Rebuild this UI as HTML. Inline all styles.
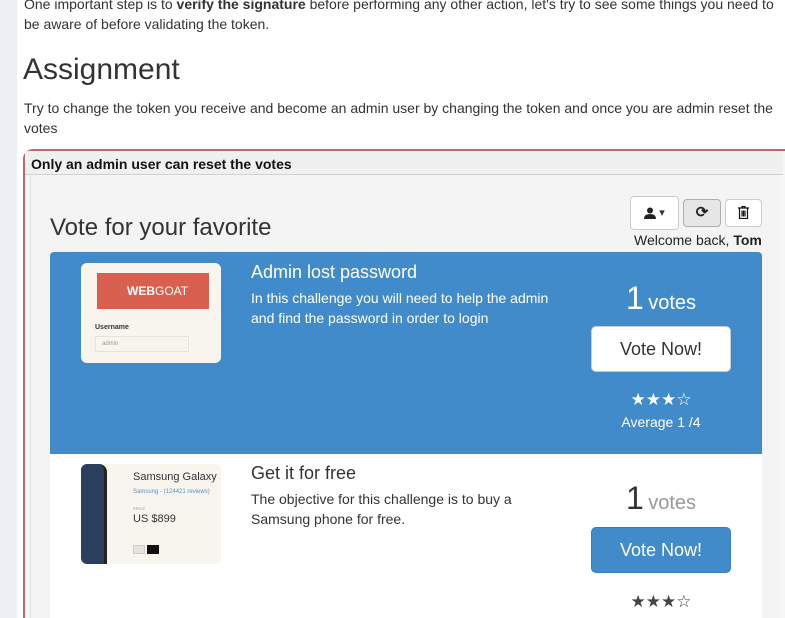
<!DOCTYPE html>
<html style="height:618px;overflow:hidden"><head><meta charset="utf-8"><style>
*{margin:0;padding:0;box-sizing:border-box}
body{width:785px;height:618px;overflow:hidden;background:#fff;font-family:"Liberation Sans",sans-serif;color:#333;position:relative}
.abs{position:absolute}
.strip{left:0;top:0;width:17px;height:618px;background:#eef0f6}
p.t{font-size:14px;line-height:20px}
.fs{left:23px;top:149px;width:775px;height:469px;border:2px solid #b56c6c;border-bottom:none;border-radius:10px 10px 0 0;background:#f6f6f6}
.leg{left:25px;top:151px;width:758px;height:24px;background:#f0f0f0;border-bottom:1px solid #d0d0d0;font-weight:bold;font-size:14px;padding:5px 0 0 6px;color:#111}
.panel{left:30px;top:176px;width:750px;height:442px;background:#f4f4f4;border-left:1px solid #ddd}
.btn{border:1px solid #ccc;border-radius:4px;background:#fff}
.item{left:50px;width:712px}
.blue{top:252px;height:202px;background:#428bca;border-radius:4px 4px 0 0;color:#fff}
.white{top:454px;height:164px;background:#fff}
.thumb{left:31px;width:140px;height:100px;border-radius:6px;background:#f8f5ef;overflow:hidden}
h4{font-weight:normal;font-size:18px}
.desc{font-size:14px;line-height:20px}
.vbtn{left:541px;width:140px;height:46px;border-radius:5px;font-size:18px;text-align:center;line-height:44px}
</style></head><body>
<div class="abs strip"></div>
<p class="abs t" style="left:24px;top:-6px;width:760px">One important step is to <b>verify the signature</b> before performing any other action, let's try to see some things you need to be aware of before validating the token.</p>
<div class="abs" style="left:23px;top:53px;font-size:30px;color:#333">Assignment</div>
<p class="abs t" style="left:24px;top:98px;width:760px">Try to change the token you receive and become an admin user by changing the token and once you are admin reset the votes</p>
<div class="abs fs"></div>
<div class="abs leg">Only an admin user can reset the votes</div>
<div class="abs panel"></div>
<div class="abs" style="left:50px;top:214px;font-size:24px;color:#333">Vote for your favorite</div>
<div class="abs btn" style="left:630px;top:196px;width:49px;height:34px;font-size:11px;text-align:center;line-height:32px">
<svg width="12" height="12" viewBox="0 0 12 12" style="vertical-align:middle"><circle cx="6" cy="3.5" r="3" fill="#222"/><path d="M0 12 Q0 7 6 7 Q12 7 12 12Z" fill="#222"/></svg> ▾</div>
<div class="abs btn" style="left:683px;top:199px;width:38px;height:28px;background:#e6e6e6;border-color:#adadad;text-align:center;line-height:26px;font-size:15px;font-weight:bold;color:#222">⟳</div>
<div class="abs btn" style="left:725px;top:199px;width:37px;height:28px;text-align:center;line-height:26px">
<svg width="11" height="13" viewBox="0 0 11 13" style="vertical-align:middle"><path d="M0 2h11M4 2V0.5h3V2M1.5 2.5v10h8v-10M4 4.5v6M5.5 4.5v6M7 4.5v6" stroke="#111" fill="none" stroke-width="1.2"/></svg></div>
<div class="abs" style="left:634px;top:232px;font-size:14px;color:#222">Welcome back, <b>Tom</b></div>

<div class="abs item blue">
 <div class="abs thumb" style="top:11px">
  <div class="abs" style="left:16px;top:10px;width:112px;height:36px;background:#d9604f;color:#fff;font-weight:bold;font-size:12px;line-height:36px;padding-left:30px">WEB<span style="font-weight:normal">GOAT</span></div>
  <div class="abs" style="left:14px;top:61px;font-size:7px;font-weight:bold;color:#333">Username</div>
  <div class="abs" style="left:14px;top:73px;width:94px;height:16px;border:1px solid #e6e2da;border-radius:2px;font-size:6px;color:#999;padding:4px 6px">admin</div>
 </div>
 <h4 class="abs" style="left:201px;top:10px">Admin lost password</h4>
 <div class="abs desc" style="left:201px;top:36px;width:310px">In this challenge you will need to help the admin and find the password in order to login</div>
 <div class="abs" style="left:541px;top:28px;width:140px;text-align:center"><span style="font-size:32px">1</span> <span style="font-size:20px">votes</span></div>
 <div class="abs vbtn" style="top:74px;background:#fff;color:#333;border:1px solid #ccc">Vote Now!</div>
 <div class="abs" style="left:541px;top:138px;width:140px;text-align:center;font-size:17px">★★★☆</div>
 <div class="abs" style="left:541px;top:162px;width:140px;text-align:center;font-size:14px">Average 1 /4</div>
</div>

<div class="abs item white">
 <div class="abs thumb" style="top:10px">
  <div class="abs" style="left:0;top:0;width:26px;height:100px;background:#2a3f5e;border-right:3px solid #222;border-radius:0 8px 0 0"></div>
  <div class="abs" style="left:52px;top:7px;font-size:11px;color:#333">Samsung Galaxy</div>
  <div class="abs" style="left:52px;top:25px;font-size:6px;color:#5b8fc7">Samsung - (124421 reviews)</div>
  <div class="abs" style="left:52px;top:42px;font-size:4px;color:#999">PRICE</div>
  <div class="abs" style="left:52px;top:49px;font-size:11px;color:#333">US $899</div>
  <div class="abs" style="left:52px;top:81px;width:12px;height:9px;background:#e6e3dc;border:1px solid #ccc"></div>
  <div class="abs" style="left:66px;top:81px;width:12px;height:9px;background:#111"></div>
 </div>
 <h4 class="abs" style="left:201px;top:9px;color:#333">Get it for free</h4>
 <div class="abs desc" style="left:201px;top:35px;width:290px;color:#333">The objective for this challenge is to buy a Samsung phone for free.</div>
 <div class="abs" style="left:541px;top:26px;width:140px;text-align:center;color:#333"><span style="font-size:32px">1</span> <span style="font-size:20px;color:#999">votes</span></div>
 <div class="abs vbtn" style="top:73px;background:#428bca;color:#fff;border:1px solid #357ebd">Vote Now!</div>
 <div class="abs" style="left:541px;top:138px;width:140px;text-align:center;font-size:17px;color:#444">★★★☆</div>
</div>
</body></html>
